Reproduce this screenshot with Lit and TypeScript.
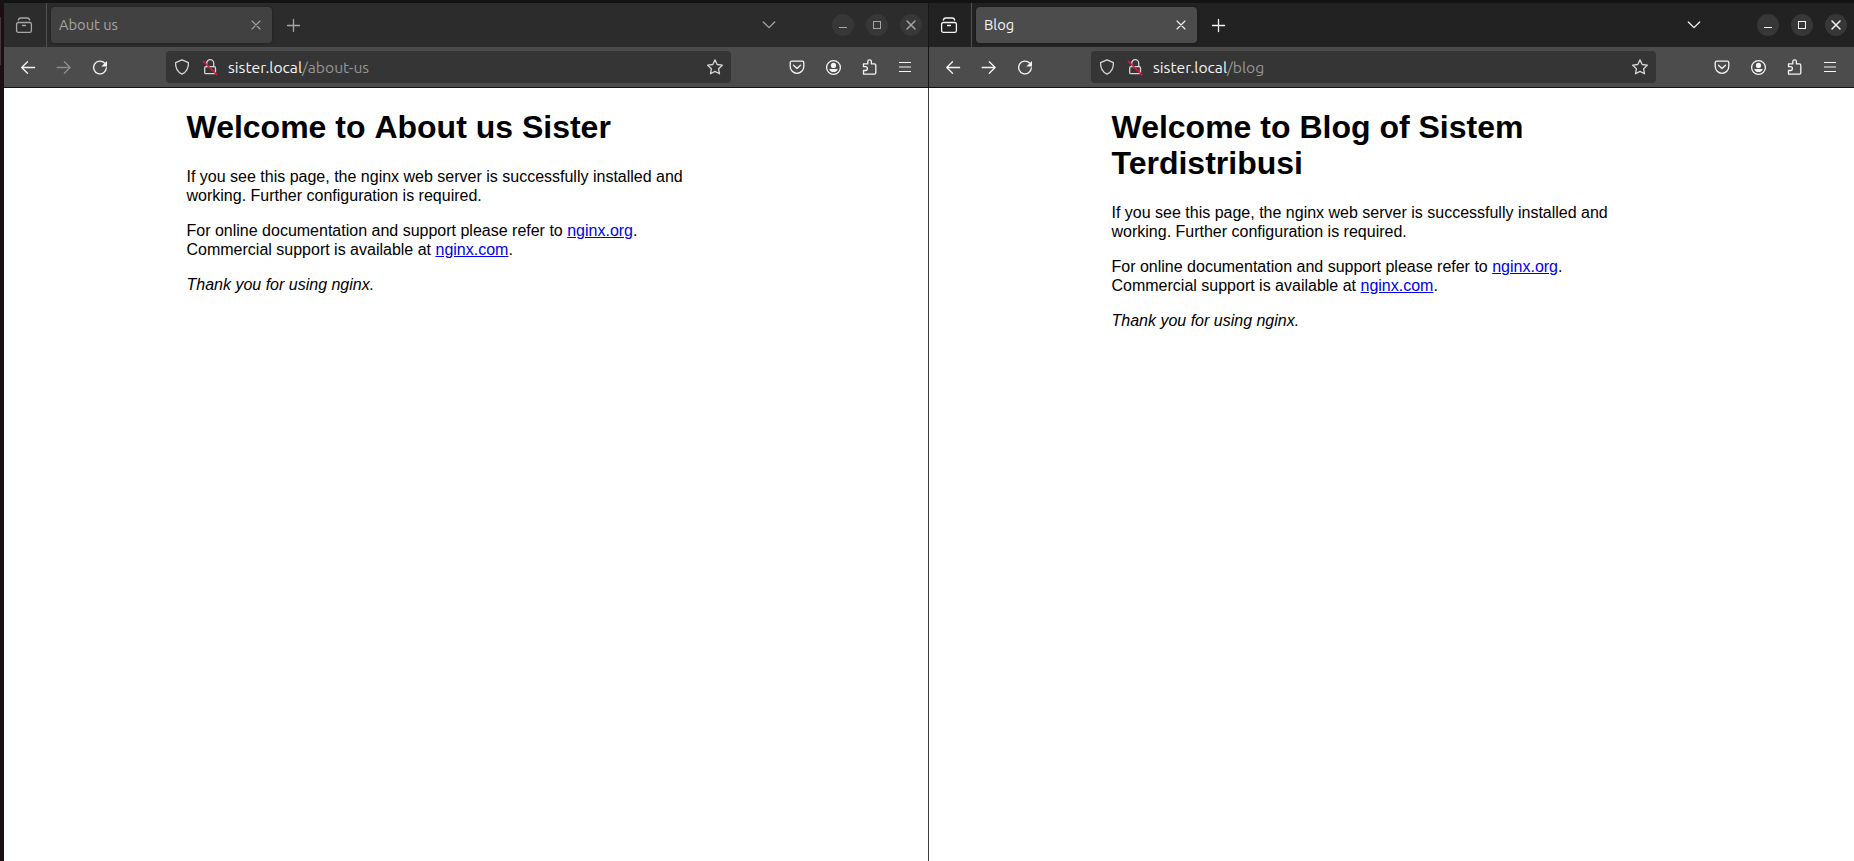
import { LitElement, html, css, svg, TemplateResult } from "lit";
import { customElement, property } from "lit/decorators.js";

const glyphs: Record<string, TemplateResult> = {
  view: svg`<rect x=".6" y="5.500" width="14.800" height="9.900" rx="1.700"/><path d="M2.300 3C2.700 1.500 3.300 1 4.600 1h6.800c1.300 0 1.900.5 2.300 2M6.500 8.500h3"/>`,
  close: svg`<path d="M4 4l8 8M12 4l-8 8"/>`,
  plus: svg`<path d="M8.500 2.500v12M2.500 8.500h12"/>`,
  chevron: svg`<path d="M2.300 5l5.700 5.600L13.700 5"/>`,
  min: svg`<path d="M4 10.500h8"/>`,
  max: svg`<rect x="4.500" y="4.500" width="7" height="7"/>`,
  back: svg`<path d="M14.600 8.500H1.800M7.500 2.700L1.700 8.500l5.800 5.800"/>`,
  forward: svg`<path d="M1.200 8.500H14M8.300 2.700l5.800 5.800-5.800 5.800"/>`,
  reload: svg`<path d="M12.600 4A6.400 6.400 0 1 0 14.400 8.800"/><path class="solid" d="M15 2v5.600H9.300z"/>`,
  shield: svg`<path d="M8 .8l6.400 2.800c.3 5-1.800 9.300-6.400 11.600C3.400 12.900 1.300 8.600 1.600 3.600z"/>`,
  lock: svg`<rect x="2.700" y="7.700" width="10.800" height="7" rx="1.300"/><path d="M4.700 7.500V4.200a3.500 3.500 0 0 1 7 0v3.300"/><path class="slash" d="M1.300 2.200l13.400 13.400"/>`,
  star: svg`<path d="M8 .9l2.200 4.600 5.100.7-3.700 3.500.9 5.100L8 12.400l-4.500 2.400.9-5.100L.7 6.200l5.100-.7z"/>`,
  pocket: svg`<path d="M2.700 2.200h10.600a1.500 1.500 0 0 1 1.500 1.500v3.800a6.800 6.800 0 0 1-13.600 0V3.700a1.500 1.500 0 0 1 1.500-1.500zM4.500 6.200L8 9.500l3.500-3.300"/>`,
  account: svg`<circle cx="8.500" cy="8.500" r="6.900"/><circle class="solid" cx="8.500" cy="6.400" r="2.600"/><path class="solid" d="M4.300 9.900h8.400c-.3 2-2 3.200-4.200 3.200s-3.900-1.200-4.200-3.200z"/>`,
  puzzle: svg`<path d="M2.500 15.200v-3.700h2a1.900 1.900 0 0 0 0-3.800h-2V4.900h4.300V2.600a1.800 1.800 0 0 1 3.600 0v2.300h3a1.400 1.400 0 0 1 1.400 1.400v7.500a1.400 1.400 0 0 1-1.400 1.400z"/>`,
  menu: svg`<path d="M2 3.500h12M2 8h12M2 12.500h12"/>`,
};

const icon = (name: string) => html`<svg class="icon ${name}" viewBox="0 0 16 16">${glyphs[name]}</svg>`;

@customElement("browser-window")
export class BrowserWindow extends LitElement {
  @property() tab = "";
  @property() path = "";
  @property() heading = "";
  @property({ type: Boolean, reflect: true }) focused = false;

  static styles = css`
    :host {
      position: relative;
      display: flex;
      flex-direction: column;
      height: 100%;
      min-height: 0;
      background: #fff;
      --strip: #2c2c2c;
      --tab: #414141;
      --ink: #a6a6a6;
      --forward: #8c8c8c;
    }
    :host([focused]) {
      --strip: #222222;
      --tab: #4c4c4c;
      --ink: #f4f4f4;
      --forward: #f4f4f4;
    }
    /* window frame edge, drawn over the neighbouring window */
    :host([focused])::before {
      content: "";
      position: absolute;
      top: 0;
      bottom: 0;
      left: -1px;
      width: 1px;
      background: linear-gradient(#161616 85px, #3c3c3c 85px);
    }
    .icon {
      width: 16px;
      height: 16px;
      display: block;
      flex: none;
      fill: none;
      stroke: currentColor;
      stroke-width: 1.3;
      stroke-linecap: round;
      stroke-linejoin: round;
      overflow: visible;
    }
    .solid { fill: currentColor; stroke: none; }
    .slash { stroke: #e8123f; stroke-width: 1.5; }
    .menu, .min, .max { stroke-linecap: butt; stroke-linejoin: miter; }
    .min, .max { stroke-width: 1; }
    .menu { stroke-width: 1.15; }
    .close { stroke-width: 1.1; }
    .control .close { stroke-width: 1.5; }
    .strip {
      flex: none;
      height: 44px;
      display: flex;
      align-items: center;
      background: var(--strip);
      color: var(--ink);
      font: 14.67px/20px Ubuntu, "Noto Sans", sans-serif;
    }
    .view-cell {
      box-sizing: border-box;
      width: 43px;
      height: 44px;
      padding: 14px 0 0 12px;
      border-right: 1px solid #505050;
    }
    .tab {
      box-sizing: border-box;
      width: 221px;
      height: 36px;
      margin-left: 4px;
      padding: 0 8px;
      display: flex;
      align-items: center;
      justify-content: space-between;
      border-radius: 4px;
      background: var(--tab);
      box-shadow: 0 0 3px rgba(0, 0, 0, 0.35);
    }
    .plus { margin-left: 13px; }
    .chevron { margin-left: auto; }
    .controls {
      display: flex;
      gap: 12px;
      width: 97px;
      margin-left: 55px;
    }
    .control {
      flex: none;
      width: 22px;
      height: 22px;
      border-radius: 50%;
      display: grid;
      place-items: center;
      background: #373737;
    }
    .bar {
      box-sizing: border-box;
      flex: none;
      height: 41px;
      display: flex;
      align-items: center;
      background: #4c4c4c;
      border-bottom: 1px solid #161316;
      color: #f4f4f4;
      padding-left: 6px;
    }
    .cell {
      width: 36px;
      display: grid;
      place-items: center;
      flex: none;
    }
    .next { color: var(--forward); }
    .url {
      box-sizing: border-box;
      flex: none;
      width: 565px;
      height: 32px;
      margin: 0 48px;
      padding: 0 8px;
      display: flex;
      align-items: center;
      border-radius: 4px;
      background: #353535;
      color: #d6d6d6;
    }
    .lock { margin-left: 12px; }
    .address {
      flex: 1;
      margin-left: 10px;
      font: 15.7px/20px Ubuntu, "Noto Sans", sans-serif;
      color: #f4f4f4;
      white-space: nowrap;
    }
    .dim { color: #959595; }
    .page {
      flex: 1;
      min-height: 0;
      background: #fff;
      color: #000;
      font: 16px/19px "Liberation Sans", Arial, sans-serif;
    }
    .body { width: 560px; margin: 0 auto; padding-top: 21px; }
    .title { margin: 0 0 22px; font-size: 32px; line-height: 36px; font-weight: 700; }
    /* keeps each word shaped alone, with no kerning across the spaces */
    .word { display: inline-block; }
    .text { margin: 0 0 16px; }
    .link { color: #0000ee; text-decoration: underline; }
  `;

  render() {
    return html`
      <div class="strip">
        <div class="view-cell">${icon("view")}</div>
        <div class="tab"><span class="name">${this.tab}</span>${icon("close")}</div>
        ${icon("plus")} ${icon("chevron")}
        <div class="controls">
          ${["min", "max", "close"].map((n) => html`<span class="control">${icon(n)}</span>`)}
        </div>
      </div>
      <div class="bar">
        <span class="cell">${icon("back")}</span>
        <span class="cell next">${icon("forward")}</span>
        <span class="cell">${icon("reload")}</span>
        <div class="url">
          ${icon("shield")}${icon("lock")}
          <span class="address">sister.local<span class="dim">${this.path}</span></span>
          ${icon("star")}
        </div>
        ${["pocket", "account", "puzzle", "menu"].map((n) => html`<span class="cell">${icon(n)}</span>`)}
      </div>
      <div class="page">
        <div class="body">
          <h1 class="title">${this.heading.split(" ").map((w) => html`<span class="word">${w}</span> `)}</h1>
          <p class="text">If you see this page, the nginx web server is successfully installed and working. Further configuration is required.</p>
          <p class="text">For online documentation and support please refer to <a class="link" href="#">nginx.org</a>.<br />Commercial support is available at <a class="link" href="#">nginx.com</a>.</p>
          <p class="text"><em>Thank you for using nginx.</em></p>
        </div>
      </div>
    `;
  }
}

@customElement("app-root")
export class AppRoot extends LitElement {
  static styles = css`
    :host {
      display: grid;
      grid-template-columns: 4px 925px 925px;
      grid-template-rows: 3px 858px;
      width: 1854px;
      height: 861px;
      overflow: hidden;
    }
    .top { grid-column: 1 / -1; background: #131313; }
    .edge {
      background:
        linear-gradient(#43373c, #43373c) 0 14px / 1px 48px no-repeat,
        #1c0f14;
    }
  `;

  render() {
    return html`
      <div class="top"></div>
      <div class="edge"></div>
      <browser-window tab="About us" path="/about-us" heading="Welcome to About us Sister"></browser-window>
      <browser-window focused tab="Blog" path="/blog" heading="Welcome to Blog of Sistem Terdistribusi"></browser-window>
    `;
  }
}
